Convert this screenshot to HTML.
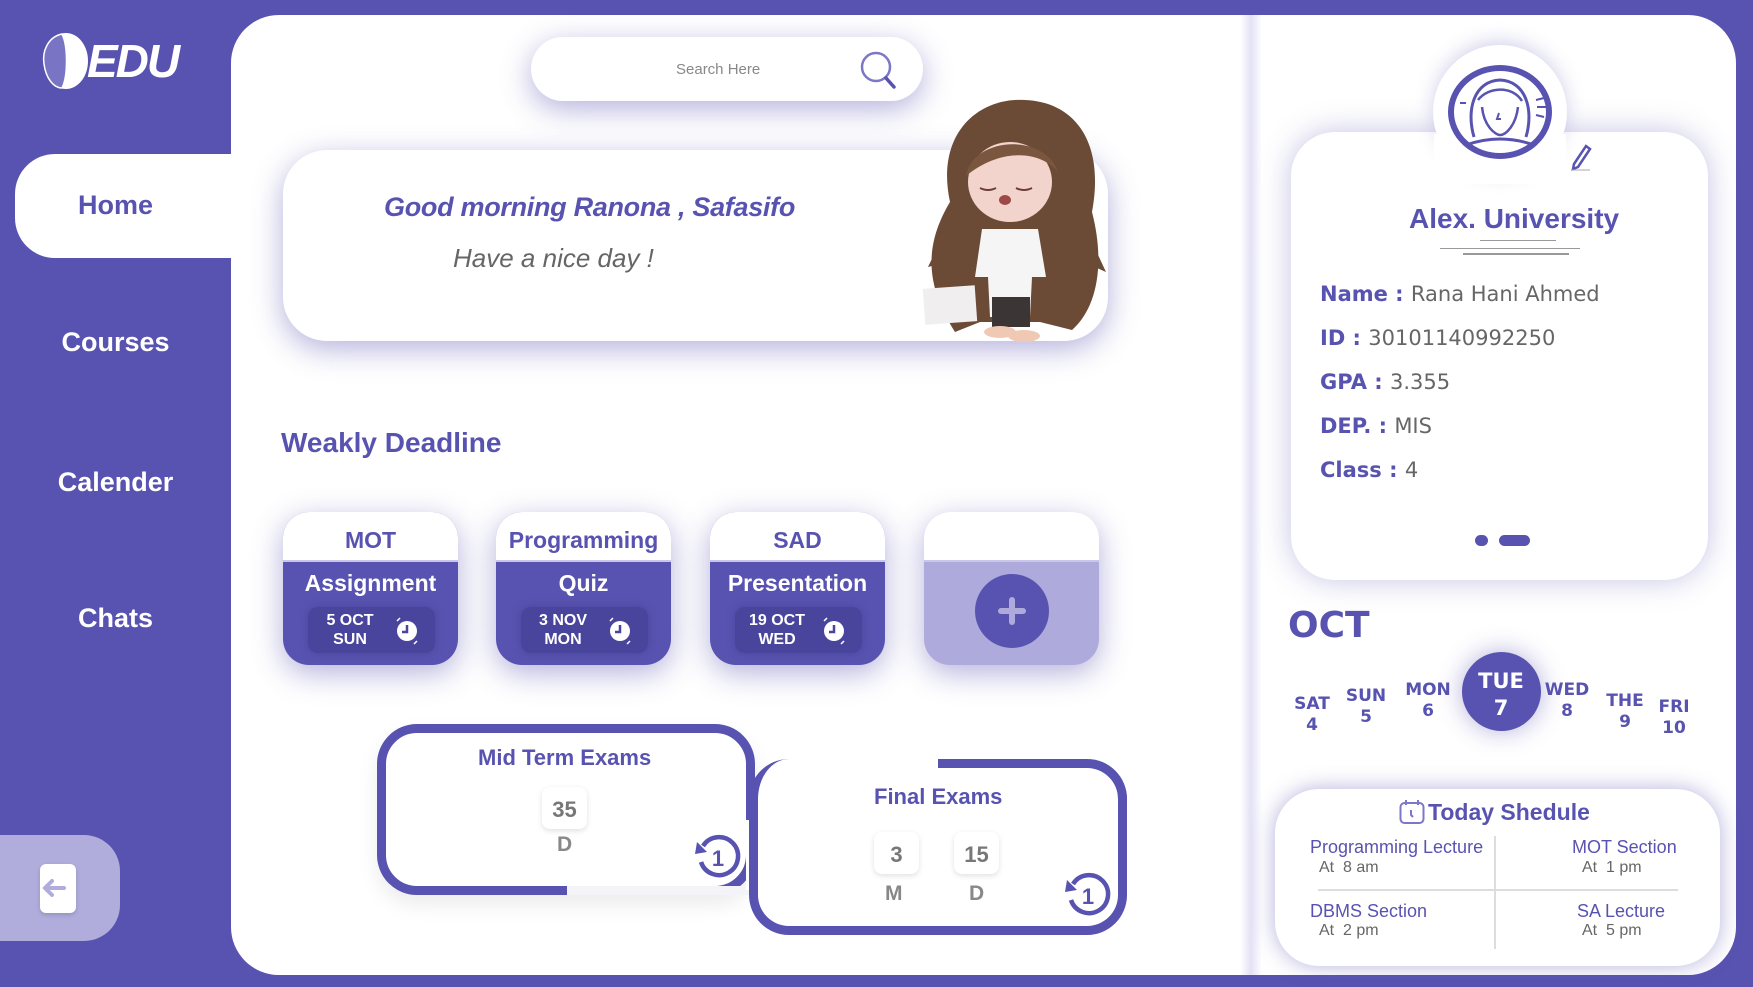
<!DOCTYPE html>
<html><head><meta charset="utf-8"><style>
*{margin:0;padding:0;box-sizing:border-box}
body{width:1753px;height:987px;background:#5853b0;position:relative;overflow:hidden;font-family:"Liberation Sans",sans-serif}
.a{position:absolute}
.main{left:231px;top:15px;width:1505px;height:960px;background:#fff;border-radius:48px;overflow:hidden}
.nav{color:#fff;font-weight:bold;font-size:27px;text-align:center;width:231px;left:0}
.sh{box-shadow:0 8px 30px rgba(88,83,176,.45)}
.card{width:175px;height:153px;border-radius:26px;overflow:hidden;top:512px;background:#5853b0}
.card .h{height:50px;background:#fff;color:#5853b0;font-weight:bold;font-size:23px;text-align:center;line-height:56px;border-bottom:2px solid #c9c6ea}
.card .t{color:#fff;font-weight:bold;font-size:23px;text-align:center;margin-top:8px}
.card .d{position:absolute;left:25px;top:95px;width:127px;height:46px;background:#4a459c;border-radius:10px;color:#fff;font-weight:bold;font-size:16px;line-height:19px;padding:4px 0 0 12px;box-shadow:0 0 8px rgba(60,55,140,.5)}
.card .d span{display:block;width:60px;text-align:center}
.card svg{position:absolute;right:14px;top:10px}
.lbl{font-family:"DejaVu Sans",sans-serif;font-size:21px;color:#5853b0;font-weight:bold;left:1320px}
.lbl span{color:#666;font-weight:normal}
.day{color:#5853b0;font-weight:bold;font-family:"DejaVu Sans",sans-serif;font-size:17px;text-align:center;line-height:21px;width:60px}
.num{width:45px;height:42px;border-radius:8px;box-shadow:0 2px 6px rgba(0,0,0,.12);color:#777;font-weight:bold;font-size:22px;text-align:center;line-height:46px}
.let{color:#888;font-weight:bold;font-size:21px}
.si{color:#5853b0;font-size:18px}
.sa{color:#666;font-size:16px}
</style></head><body>
<svg class="a" style="left:40px;top:31px" width="52" height="60" viewBox="0 0 52 60"><ellipse cx="26" cy="30" rx="22" ry="28" fill="#fff"/><path d="M22 3 C8 6 2 20 4 33 C6 48 14 57 22 57 C28 45 28 15 22 3Z" fill="#7a74c4" stroke="#fff" stroke-width="1.5"/></svg>
<div class="a" style="left:87px;top:34px;color:#fff;font-weight:bold;font-style:italic;font-size:46px;letter-spacing:-2px">EDU</div>
<div class="main a"></div>
<div class="a" style="left:1240px;top:15px;width:22px;height:960px;background:linear-gradient(90deg,rgba(255,255,255,0),rgba(200,196,235,.5),rgba(255,255,255,0))"></div>
<div class="a" style="left:15px;top:154px;width:216px;height:104px;background:#fff;border-radius:40px 0 0 40px"></div>
<div class="a nav" style="top:190px;color:#5853b0;left:0;width:231px">Home</div>
<div class="a nav" style="top:327px">Courses</div>
<div class="a nav" style="top:467px">Calender</div>
<div class="a nav" style="top:603px">Chats</div>
<div class="a" style="left:0;top:835px;width:120px;height:106px;background:#b0acdc;border-radius:0 36px 36px 0"></div>
<div class="a" style="left:40px;top:864px;width:36px;height:49px;background:#fff;border-radius:6px;box-shadow:0 2px 4px rgba(0,0,0,.15)"></div>
<svg class="a" style="left:40px;top:876px" width="30" height="24" viewBox="0 0 30 24"><path d="M24 12H6M12 5L5 12L12 19" stroke="#b0acdc" stroke-width="4" fill="none" stroke-linecap="round"/></svg>
<div class="a sh" style="left:531px;top:37px;width:392px;height:64px;background:#fff;border-radius:32px"></div>
<div class="a" style="left:676px;top:61px;color:#888;font-size:15px">Search Here</div>
<svg class="a" style="left:858px;top:49px" width="40" height="42" viewBox="0 0 40 42"><circle cx="18" cy="18" r="14" fill="none" stroke="#7c77c8" stroke-width="2.5"/><path d="M28 29L36 38" stroke="#5853b0" stroke-width="3.5" stroke-linecap="round"/></svg>
<div class="a sh" style="left:283px;top:150px;width:825px;height:191px;background:#fff;border-radius:44px"></div>
<div class="a" style="left:384px;top:192px;color:#5853b0;font-weight:bold;font-style:italic;font-size:27px;letter-spacing:-0.3px">Good morning Ranona , Safasifo</div>
<div class="a" style="left:453px;top:243px;color:#666;font-style:italic;font-size:26px">Have a nice day !</div>
<svg class="a" style="left:920px;top:92px" width="190" height="252" viewBox="0 0 190 252">
<path d="M30 110 C15 40 60 5 105 8 C155 10 185 50 172 120 C185 170 178 215 152 238 L120 230 L60 230 L35 240 C10 200 0 160 30 110Z" fill="#6b4a36"/>
<path d="M20 150 L8 175 L28 170 Z M172 150 L186 180 L168 172Z" fill="#6b4a36"/>
<ellipse cx="90" cy="90" rx="42" ry="40" fill="#f3d4cc"/>
<path d="M46 84 C52 45 125 40 138 80 C120 58 80 56 46 84Z" fill="#7a563f"/>
<ellipse cx="85" cy="108" rx="6" ry="5" fill="#9e4848"/>
<path d="M60 96 Q68 100 76 96 M96 96 Q104 100 112 96" stroke="#6b3c3c" stroke-width="2" fill="none"/>
<path d="M62 137 L118 137 L126 185 L112 185 L110 225 L70 225 L68 185 L55 185Z" fill="#f5f5f5"/>
<rect x="72" y="205" width="38" height="30" fill="#3b3535"/>
<rect x="4" y="195" width="52" height="36" fill="#f0eeee" transform="rotate(-4 30 213)"/>
<ellipse cx="80" cy="240" rx="16" ry="6" fill="#f0c9b5"/><ellipse cx="104" cy="244" rx="16" ry="6" fill="#f0c9b5"/>
</svg>
<div class="a" style="left:281px;top:427px;color:#5853b0;font-weight:bold;font-size:28px">Weakly Deadline</div>
<div class="a card sh" style="left:283px"><div class="h">MOT</div><div class="t">Assignment</div><div class="d"><span>5 OCT</span><span>SUN</span><svg width="28" height="28" viewBox="0 0 28 28"><circle cx="14" cy="14" r="10" fill="#fff"/><path d="M14 8V15H9" stroke="#4a459c" stroke-width="2.5" fill="none"/><path d="M4 4L7 1M24 24L21 27" stroke="#fff" stroke-width="1.5"/></svg></div></div>
<div class="a card sh" style="left:496px"><div class="h">Programming</div><div class="t">Quiz</div><div class="d"><span>3 NOV</span><span>MON</span><svg width="28" height="28" viewBox="0 0 28 28"><circle cx="14" cy="14" r="10" fill="#fff"/><path d="M14 8V15H9" stroke="#4a459c" stroke-width="2.5" fill="none"/><path d="M4 4L7 1M24 24L21 27" stroke="#fff" stroke-width="1.5"/></svg></div></div>
<div class="a card sh" style="left:710px"><div class="h">SAD</div><div class="t">Presentation</div><div class="d"><span>19 OCT</span><span>WED</span><svg width="28" height="28" viewBox="0 0 28 28"><circle cx="14" cy="14" r="10" fill="#fff"/><path d="M14 8V15H9" stroke="#4a459c" stroke-width="2.5" fill="none"/><path d="M4 4L7 1M24 24L21 27" stroke="#fff" stroke-width="1.5"/></svg></div></div>
<div class="a card sh" style="left:924px;background:#aeaadb"><div class="h"></div></div>
<div class="a" style="left:975px;top:574px;width:74px;height:74px;border-radius:50%;background:#5853b0"></div>
<div class="a" style="left:998px;top:608px;width:28px;height:6px;background:#aeaadb;border-radius:3px"></div>
<div class="a" style="left:1009px;top:597px;width:6px;height:28px;background:#aeaadb;border-radius:3px"></div>
<!-- mid term -->
<div class="a" style="left:377px;top:724px;width:378px;height:171px;border:9px solid #5853b0;border-radius:40px;background:#fff;box-shadow:0 10px 20px rgba(0,0,0,.08)"></div>
<div class="a" style="left:567px;top:886px;width:188px;height:9px;background:#f4f4f8"></div>
<div class="a" style="left:746px;top:820px;width:9px;height:70px;background:#fff"></div>
<div class="a" style="left:478px;top:745px;color:#5853b0;font-weight:bold;font-size:22px">Mid Term Exams</div>
<div class="a num" style="left:542px;top:787px">35</div>
<div class="a let" style="left:557px;top:833px">D</div>
<svg class="a" style="left:693px;top:832px" width="50" height="50" viewBox="0 0 50 50"><path d="M10 14 A19 19 0 1 1 8 30" fill="none" stroke="#5853b0" stroke-width="4.5"/><path d="M4 10L14 20L2 22Z" fill="#5853b0"/><text x="25" y="34" text-anchor="middle" font-family="Liberation Sans" font-weight="bold" font-size="22" fill="#5853b0">1</text></svg>
<!-- final -->
<div class="a" style="left:749px;top:759px;width:378px;height:176px;border:9px solid #5853b0;border-top:none;border-radius:40px;background:#fff"></div>
<div class="a" style="left:938px;top:759px;height:40px;border-top:9px solid #5853b0;border-right:9px solid #5853b0;border-radius:0 40px 0 0;width:189px"></div>
<div class="a" style="left:874px;top:784px;color:#5853b0;font-weight:bold;font-size:22px">Final Exams</div>
<div class="a num" style="left:874px;top:832px">3</div>
<div class="a num" style="left:954px;top:832px">15</div>
<div class="a let" style="left:885px;top:882px">M</div>
<div class="a let" style="left:969px;top:882px">D</div>
<svg class="a" style="left:1063px;top:870px" width="50" height="50" viewBox="0 0 50 50"><path d="M10 14 A19 19 0 1 1 8 30" fill="none" stroke="#5853b0" stroke-width="4.5"/><path d="M4 10L14 20L2 22Z" fill="#5853b0"/><text x="25" y="34" text-anchor="middle" font-family="Liberation Sans" font-weight="bold" font-size="22" fill="#5853b0">1</text></svg>
<!-- profile -->
<div class="a" style="left:1291px;top:132px;width:417px;height:448px;background:#fff;border-radius:44px;box-shadow:0 0 30px rgba(88,83,176,.35)"></div>
<div class="a" style="left:1433px;top:45px;width:134px;height:134px;border-radius:50%;background:#fff;box-shadow:0 -4px 18px rgba(88,83,176,.25)"></div>
<div class="a" style="left:1434px;top:134px;width:132px;height:50px;background:#fff"></div>
<svg class="a" style="left:1448px;top:65px" width="104" height="94" viewBox="0 0 104 94"><ellipse cx="52" cy="47" rx="49" ry="44" fill="none" stroke="#5853b0" stroke-width="6"/><path d="M26 72 C18 45 26 16 52 15 C78 16 86 45 78 72" fill="none" stroke="#5853b0" stroke-width="3"/><path d="M30 35 C40 22 64 20 74 36 M34 42 C36 62 48 70 52 70 C58 70 68 60 70 42" fill="none" stroke="#5853b0" stroke-width="2.5"/><path d="M51 48 L49 54 L53 54" fill="none" stroke="#5853b0" stroke-width="2"/><path d="M18 80 Q52 68 86 80" fill="none" stroke="#5853b0" stroke-width="3"/><path d="M88 35L96 33M89 42L98 42M88 50L96 52M12 38L18 38" stroke="#5853b0" stroke-width="2"/></svg>
<svg class="a" style="left:1568px;top:142px" width="26" height="30" viewBox="0 0 26 30"><path d="M6 22L18 4L22 7L10 25L5 27Z" fill="none" stroke="#5853b0" stroke-width="2.5"/><path d="M4 28H22" stroke="#aaa" stroke-width="1"/></svg>
<div class="a" style="left:1409px;top:203px;color:#5853b0;font-weight:bold;font-size:28px">Alex. University</div>
<div class="a" style="left:1440px;top:248px;width:140px;height:1px;background:#999"></div>
<div class="a" style="left:1480px;top:240px;width:76px;height:1px;background:#999"></div>
<div class="a" style="left:1463px;top:253px;width:106px;height:2px;background:#999"></div>
<div class="a lbl" style="top:282px">Name : <span>Rana Hani Ahmed</span></div>
<div class="a lbl" style="top:326px">ID : <span>30101140992250</span></div>
<div class="a lbl" style="top:370px">GPA : <span>3.355</span></div>
<div class="a lbl" style="top:414px">DEP. : <span>MIS</span></div>
<div class="a lbl" style="top:458px">Class : <span>4</span></div>
<div class="a" style="left:1475px;top:535px;width:13px;height:11px;border-radius:6px;background:#5853b0"></div>
<div class="a" style="left:1499px;top:535px;width:31px;height:11px;border-radius:6px;background:#5853b0"></div>
<div class="a" style="left:1288px;top:605px;color:#5853b0;font-weight:bold;font-size:36px;font-family:'DejaVu Sans',sans-serif">OCT</div>
<div class="a" style="left:1462px;top:652px;width:79px;height:79px;border-radius:50%;background:#5853b0;box-shadow:0 0 25px rgba(88,83,176,.45)"></div>
<div class="a day" style="left:1282px;top:694px">SAT<br>4</div>
<div class="a day" style="left:1336px;top:686px">SUN<br>5</div>
<div class="a day" style="left:1398px;top:680px">MON<br>6</div>
<div class="a day" style="left:1471px;top:668px;color:#fff;font-size:21px;line-height:27px">TUE<br>7</div>
<div class="a day" style="left:1537px;top:680px">WED<br>8</div>
<div class="a day" style="left:1595px;top:691px">THE<br>9</div>
<div class="a day" style="left:1644px;top:697px">FRI<br>10</div>
<div class="a" style="left:1275px;top:789px;width:445px;height:177px;background:#fff;border-radius:44px;box-shadow:0 0 22px rgba(88,83,176,.45)"></div>
<svg class="a" style="left:1399px;top:799px" width="26" height="26" viewBox="0 0 26 26"><rect x="1.5" y="4" width="23" height="20" rx="4" fill="none" stroke="#7c77c8" stroke-width="2"/><path d="M7 1V6M19 1V6M12 11V16L14 18" stroke="#7c77c8" stroke-width="2" fill="none"/></svg>
<div class="a" style="left:1428px;top:799px;color:#5853b0;font-weight:bold;font-size:23px">Today Shedule</div>
<div class="a" style="left:1494px;top:836px;width:2px;height:113px;background:#ddd"></div>
<div class="a" style="left:1318px;top:889px;width:360px;height:2px;background:#ddd"></div>
<div class="a si" style="left:1310px;top:837px">Programming Lecture</div>
<div class="a sa" style="left:1319px;top:859px">At &nbsp;8 am</div>
<div class="a si" style="left:1572px;top:837px">MOT Section</div>
<div class="a sa" style="left:1582px;top:859px">At &nbsp;1 pm</div>
<div class="a si" style="left:1310px;top:901px">DBMS Section</div>
<div class="a sa" style="left:1319px;top:922px">At &nbsp;2 pm</div>
<div class="a si" style="left:1577px;top:901px">SA Lecture</div>
<div class="a sa" style="left:1582px;top:922px">At &nbsp;5 pm</div>
</body></html>
